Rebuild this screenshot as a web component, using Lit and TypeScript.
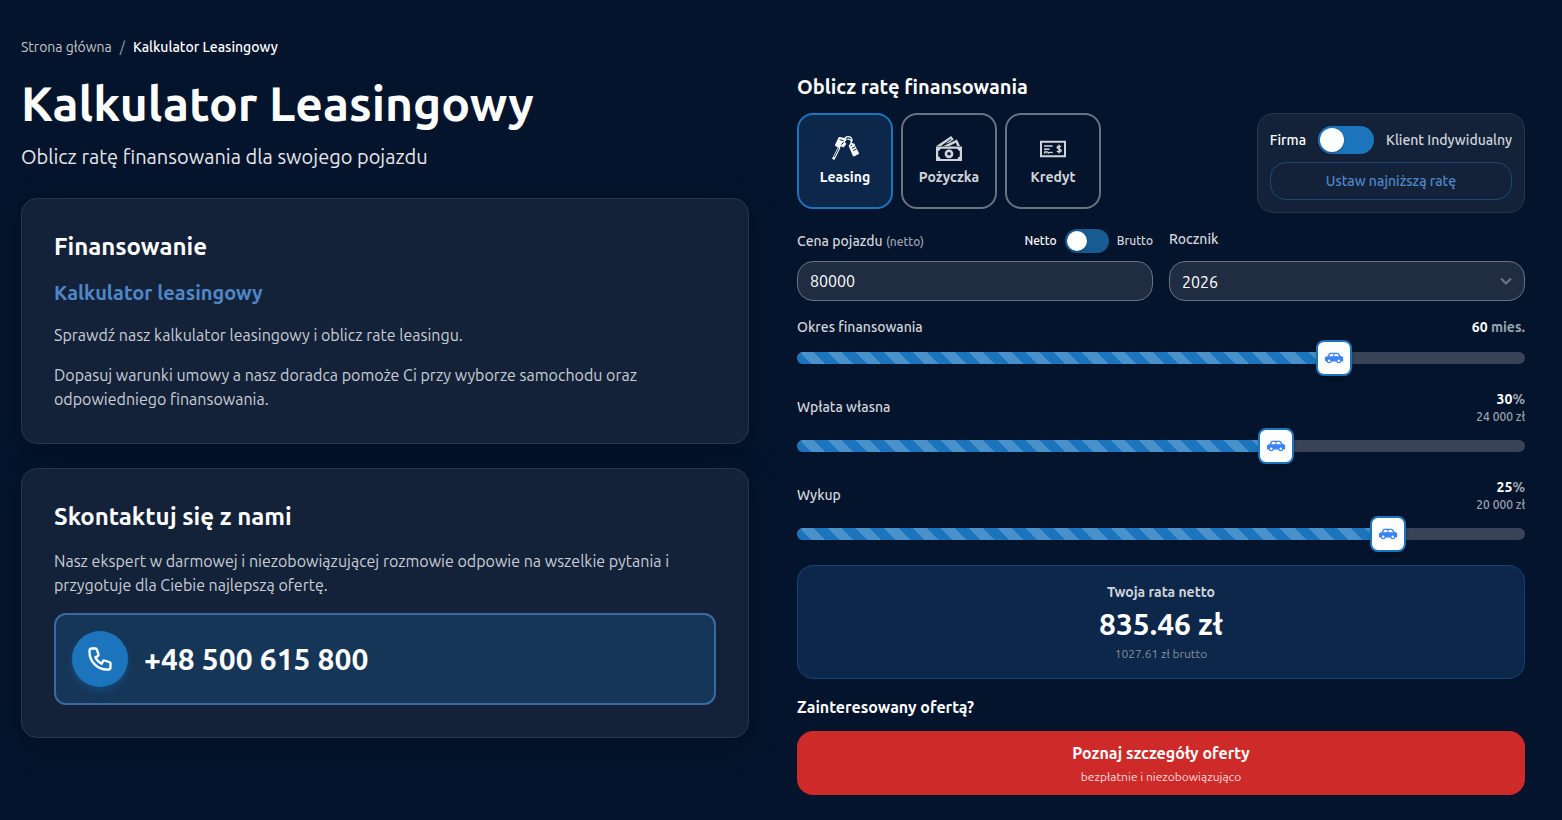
import { LitElement, html, css, svg } from "lit";
import { customElement, property, state } from "lit/decorators.js";
import { classMap } from "lit/directives/class-map.js";
import { styleMap } from "lit/directives/style-map.js";

const keysIcon = svg`
  <path fill="none" stroke="currentColor" stroke-width="2.6" d="M8.200 12.400 2.200 24.400"/>
  <path fill="none" stroke="#0c274a" stroke-width="0.900" d="M7.600 13.200 3.200 22"/>
  <path fill="currentColor" d="M7.400 2.800c.3-.7.900-1 1.600-.8L16 3.800l-2.200 3.400 1.700 1.600-2.900 3.800-2.600-1.400-1.400 1.800-3.800-1.800c-.7-.3-.9-1-.6-1.700z"/>
  <path fill="none" stroke="currentColor" stroke-width="1.300" d="M13.600 3.600C15 1 19.400.900 20.600 3.600c.8 1.800.2 3.600-1.200 4.800M16.400 4.400c1.600-.6 3.200.2 3.600 1.800"/>
  <path fill="currentColor" d="M17.600 10.800 19.800 8l3.400.6 4.600 9.200c.3.700.1 1.200-.5 1.500l-4 2c-.7.300-1.200.100-1.500-.5z"/>
  <g stroke="#0c274a" fill="none" stroke-width="1">
    <path d="m8.600 4.600 4 1.200M12.800 7.400l-2.600 2.200M21 13.400l3.600-1.800M22.200 15.600l3.600-1.800M19.600 10.800l1.400-.8"/>
  </g>`;

const cashIcon = svg`
  <path fill="currentColor" fill-rule="evenodd" d="M1 11.500h26V26H1zM5.600 13.700a3 3 0 0 1-2.400 2.400v5.400a3 3 0 0 1 2.400 2.400h16.800a3 3 0 0 1 2.400-2.400v-5.400a3 3 0 0 1-2.400-2.400z"/>
  <path fill="currentColor" fill-rule="evenodd" d="M14 14.400a4.400 4.400 0 1 1 0 8.800 4.400 4.400 0 0 1 0-8.800zm0 2.600a1.800 1.800 0 1 0 0 3.600 1.800 1.800 0 0 0 0-3.600z"/>
  <path fill="currentColor" d="M1.400 11 16.200 1l2.600 3.600-2 1.200-1.100-1.700L6 11z"/>
  <path fill="currentColor" d="m8.600 11 13.400-6.400 3 6.400h-2.800l-1.400-3.200L14.400 11z"/>
  <path fill="currentColor" d="m10.600 8.400 5-3.400 1.600.8-3.400 2z"/>`;

const chequeIcon = svg`
  <g fill="none" stroke="currentColor">
    <path d="M2 6.800h24v14.400H2z" stroke-width="2"/>
    <path d="M5 11h8.600M5 14.200h5.600" stroke-width="1.600"/>
    <path d="M5.200 18.600c.8-3 2-2.600 1.800-.6 1-2 2-1.400 2.200 0 1-1.200 3-.4 4.600-.4" stroke-width="1.200"/>
    <path d="M22 11.900c-.6-.8-3.800-1-3.800.6 0 1.800 4 .9 4 2.900 0 1.900-3.600 1.600-4.200.6M20.200 9.800v8.400" stroke-width="1.500"/>
  </g>`;

const phoneIcon = svg`
  <path fill="none" stroke="currentColor" stroke-width="2" stroke-linejoin="round" stroke-linecap="round"
    d="M3 5a2 2 0 012-2h3.280a1 1 0 01.948.684l1.498 4.493a1 1 0 01-.502 1.210l-2.257 1.130a11.042 11.042 0 005.516 5.516l1.130-2.257a1 1 0 011.210-.502l4.493 1.498a1 1 0 01.684.949V19a2 2 0 01-2 2h-1C9.716 21 3 14.284 3 6V5z"/>`;

@customElement("finance-slider")
export class FinanceSlider extends LitElement {
  @property() label = "";
  @property() unit = "";
  @property() amount = "";
  @property({ type: Number }) min = 0;
  @property({ type: Number }) max = 100;
  @property({ type: Number }) value = 0;

  static styles = css`
    :host { display: block; }
    .head {
      display: flex;
      justify-content: space-between;
      align-items: center;
      margin-bottom: 3px;
      font-size: 14px;
      line-height: 20px;
      font-weight: 500;
      color: #d1d5db;
    }
    .values { text-align: right; color: #9ca3af; font-weight: 600; }
    .values strong { color: #fff; font-weight: 700; }
    .amount { display: block; font-size: 12px; line-height: 16px; font-weight: 500; }
    .rail { display: grid; align-items: center; }
    .track, .range { grid-area: 1 / 1; }
    .track { height: 12px; border-radius: 6px; background: #384357; overflow: hidden; }
    .fill {
      height: 100%;
      background: repeating-linear-gradient(45deg, #1c75bc 0 10px, #4991ca 10px 20px);
    }
    .range {
      appearance: none;
      width: 100%;
      height: 36px;
      margin: 0;
      background: none;
      cursor: pointer;
    }
    .range::-webkit-slider-thumb {
      appearance: none;
      box-sizing: border-box;
      width: 36px;
      height: 36px;
      border: 2px solid #1c75bc;
      border-radius: 8px;
      background: #fff center / 20px 20px no-repeat
        url("data:image/svg+xml,%3Csvg xmlns='http://www.w3.org/2000/svg' viewBox='0 0 20 20'%3E%3Cpath fill='%233b82f6' fill-rule='evenodd' d='M6.200 4.800h7.300c.6 0 1 .2 1.400.7l2 2.700 1.500.4c.5.200.8.600.8 1.100v2.700c0 .6-.4 1-1 1h-1.100H2.300c-.8 0-1.400-.5-1.400-1.200v-1.600c0-1 .6-1.700 1.500-2L3.800 8l1.100-2.400c.3-.5.7-.8 1.300-.8zM6.300 5.900 5.200 8.200h4.100V5.900zm4.100 0v2.300h4.800l-1.500-2c-.2-.2-.4-.3-.6-.3z'/%3E%3Cg fill='%23fff' stroke='%233b82f6' stroke-width='1.200'%3E%3Ccircle cx='5.200' cy='12.800' r='1.900'/%3E%3Ccircle cx='14.800' cy='12.800' r='1.900'/%3E%3C/g%3E%3C/svg%3E");
      box-shadow: 0 2px 4px rgba(0, 0, 0, 0.2);
    }
  `;

  render() {
    const ratio = (this.value - this.min) / (this.max - this.min);
    return html`
      <div class="head">
        <label for="range">${this.label}</label>
        <div class="values">
          <strong>${this.value}</strong>${this.unit}
          ${this.amount ? html`<span class="amount">${this.amount}</span>` : null}
        </div>
      </div>
      <div class="rail">
        <div class="track"><div class="fill" style=${styleMap({ width: `${ratio * 100}%` })}></div></div>
        <input id="range" class="range" type="range" min=${this.min} max=${this.max} .value=${String(this.value)}
          @input=${(e: Event) => (this.value = Number((e.target as HTMLInputElement).value))} />
      </div>`;
  }
}

@customElement("app-root")
export class AppRoot extends LitElement {
  @state() private product = "Leasing";

  private products = [
    { name: "Leasing", icon: keysIcon },
    { name: "Pożyczka", icon: cashIcon },
    { name: "Kredyt", icon: chequeIcon },
  ];

  static styles = css`
    :host {
      display: block;
      box-sizing: border-box;
      min-height: 100vh;
      padding-right: 16px;
      background: #04142c;
      color: #fff;
      font-family: Ubuntu, "Open Sans", sans-serif;
      font-size: 16px;
      line-height: 24px;
    }
    * { box-sizing: border-box; }
    h1, h2, h3, p { margin: 0; }
    h1, h2, h3 { font-weight: 600; }
    button, input, select { font: inherit; color: inherit; }
    button { cursor: pointer; }

    .page {
      display: grid;
      grid-template-columns: repeat(2, minmax(0, 1fr));
      gap: 48px;
      max-width: 1536px;
      margin: 0 auto;
      padding: 37px 16px 24px;
    }

    .crumbs { display: flex; gap: 8px; font-size: 14px; line-height: 20px; color: #9ca3af; }
    .crumbs a { color: #c4c8cf; text-decoration: none; }
    .crumbs .here { color: #fff; font-weight: 500; }
    .title { margin-top: 16px; font-size: 48px; line-height: 60px; }
    .lead { margin-top: 10px; font-size: 20px; line-height: 28px; color: #e5e7eb; }
    .cards { display: grid; gap: 24px; margin-top: 27px; }
    .card {
      display: grid;
      gap: 16px;
      padding: 32px;
      border: 1px solid #29354b;
      border-radius: 16px;
      background: #142239;
      box-shadow: 0 8px 32px rgba(0, 0, 0, 0.2);
      color: #c8cdd5;
    }
    .card h2 { font-size: 24px; line-height: 32px; color: #fff; }
    .card h3 { font-size: 20px; line-height: 28px; color: #4f87c7; }
    .phone {
      display: flex;
      align-items: center;
      gap: 16px;
      padding: 16px;
      border: 2px solid #3a6aa3;
      border-radius: 12px;
      background: #163658;
      color: #fff;
      font-size: 30px;
      line-height: 36px;
      font-weight: 700;
      text-decoration: none;
    }
    .disc {
      display: grid;
      place-items: center;
      width: 56px;
      height: 56px;
      border-radius: 50%;
      background: #1c75bc;
      box-shadow: 0 4px 6px rgba(28, 117, 188, 0.3);
    }
    .disc svg { width: 28px; height: 28px; }

    .calc { padding-top: 36px; }
    .calc h2 { font-size: 20px; line-height: 28px; margin-bottom: 12px; }
    .top { display: flex; justify-content: space-between; align-items: flex-start; }
    .products { display: flex; gap: 8px; }
    .product {
      display: flex;
      flex-direction: column;
      align-items: center;
      justify-content: center;
      gap: 4px;
      width: 96px;
      height: 96px;
      padding: 0;
      border: 2px solid #6b7280;
      border-radius: 16px;
      background: none;
      color: #d1d5db;
      font-size: 14px;
      line-height: 20px;
      font-weight: 600;
    }
    .product svg { width: 28px; height: 28px; }
    .product.active { border-color: #1c75bc; background: #0c274a; color: #fff; }

    .client {
      display: grid;
      gap: 8px;
      padding: 12px;
      border: 1px solid #29354b;
      border-radius: 16px;
      background: #142239;
      font-size: 14px;
      line-height: 20px;
      font-weight: 500;
    }
    .pair { display: flex; align-items: center; justify-content: space-between; gap: 12px; }
    .off { color: #d1d5db; }
    .lowest {
      height: 38px;
      border: 1px solid #1a4a78;
      border-radius: 16px;
      background: none;
      color: #4f87c7;
    }
    .switch {
      appearance: none;
      display: flex;
      width: 56px;
      height: 28px;
      margin: 0;
      padding: 2px;
      border-radius: 14px;
      background: #1c75bc;
      cursor: pointer;
    }
    .switch::before {
      content: "";
      height: 100%;
      aspect-ratio: 1;
      border-radius: 50%;
      background: #fff;
      box-shadow: 0 1px 2px rgba(0, 0, 0, 0.3);
    }
    .switch:checked { justify-content: flex-end; }
    .switch.small { width: 44px; height: 24px; background: #185a92; }

    .fields { display: grid; grid-template-columns: 1fr 1fr; gap: 16px; margin-top: 16px; }
    .field { display: flex; flex-direction: column; justify-content: space-between; height: 72px; }
    .field-head { display: flex; justify-content: space-between; align-items: center; }
    .label { font-size: 14px; line-height: 20px; font-weight: 500; color: #d1d5db; }
    .label small { font-size: 12px; color: #9ca3af; }
    .tax { display: flex; align-items: center; gap: 8px; font-size: 12px; line-height: 16px; font-weight: 500; }
    .box {
      width: 100%;
      height: 40px;
      padding: 0 12px;
      border: 1px solid #6b7280;
      border-radius: 16px;
      background: #1f2c42;
      color: #fff;
    }
    select.box {
      appearance: none;
      padding-top: 2px;
      background: #1f2c42 right 12px center / 12px 8px no-repeat
        url("data:image/svg+xml,%3Csvg xmlns='http://www.w3.org/2000/svg' viewBox='0 0 12 8'%3E%3Cpath d='M1 1.500 6 6.500 11 1.500' fill='none' stroke='%236b7280' stroke-width='2.200'/%3E%3C/svg%3E");
    }
    .sliders { display: grid; gap: 13px; margin-top: 16px; }

    .result {
      display: grid;
      gap: 4px;
      margin-top: 13px;
      padding: 16px;
      border: 1px solid #124574;
      border-radius: 16px;
      background: #0c274a;
      text-align: center;
    }
    .result-label { font-size: 14px; line-height: 20px; font-weight: 600; color: #d1d5db; }
    .result-value { font-size: 30px; line-height: 36px; font-weight: 700; }
    .result-gross { font-size: 12px; line-height: 16px; color: #8791a1; }
    .ask { margin: 16px 0 12px; font-weight: 600; }
    .offer {
      display: grid;
      gap: 4px;
      width: 100%;
      padding: 10px 16px;
      border: 0;
      border-radius: 16px;
      background: #ce2a2a;
      font-weight: 600;
    }
    .offer small { font-size: 12px; line-height: 16px; font-weight: 400; color: #f8dede; }
  `;

  render() {
    return html`
      <main class="page">
        <section>
          <nav class="crumbs">
            <a href="#">Strona główna</a><span>/</span><span class="here">Kalkulator Leasingowy</span>
          </nav>
          <h1 class="title">Kalkulator Leasingowy</h1>
          <p class="lead">Oblicz ratę finansowania dla swojego pojazdu</p>
          <div class="cards">
            <article class="card">
              <h2>Finansowanie</h2>
              <h3>Kalkulator leasingowy</h3>
              <p>Sprawdź nasz kalkulator leasingowy i oblicz rate leasingu.</p>
              <p>Dopasuj warunki umowy a nasz doradca pomoże Ci przy wyborze samochodu oraz odpowiedniego finansowania.</p>
            </article>
            <article class="card">
              <h2>Skontaktuj się z nami</h2>
              <p>Nasz ekspert w darmowej i niezobowiązującej rozmowie odpowie na wszelkie pytania i przygotuje dla Ciebie najlepszą ofertę.</p>
              <a class="phone" href="tel:+48500615800">
                <span class="disc"><svg viewBox="0 0 24 24">${phoneIcon}</svg></span>
                <span>+48 500 615 800</span>
              </a>
            </article>
          </div>
        </section>

        <section class="calc">
          <h2>Oblicz ratę finansowania</h2>
          <div class="top">
            <div class="products">
              ${this.products.map((p) => html`
                <button class=${classMap({ product: true, active: p.name === this.product })}
                  @click=${() => (this.product = p.name)}>
                  <svg viewBox="0 0 28 28">${p.icon}</svg>
                  <span>${p.name}</span>
                </button>`)}
            </div>
            <div class="client">
              <div class="pair">
                <label for="client">Firma</label>
                <input id="client" class="switch" type="checkbox" role="switch" />
                <label class="off" for="client">Klient Indywidualny</label>
              </div>
              <button class="lowest">Ustaw najniższą ratę</button>
            </div>
          </div>

          <div class="fields">
            <div class="field">
              <div class="field-head">
                <label class="label" for="price">Cena pojazdu <small>(netto)</small></label>
                <div class="tax">
                  <label for="tax">Netto</label>
                  <input id="tax" class="switch small" type="checkbox" role="switch" />
                  <label class="off" for="tax">Brutto</label>
                </div>
              </div>
              <input id="price" class="box" type="text" inputmode="numeric" value="80000" />
            </div>
            <div class="field">
              <label class="label" for="year">Rocznik</label>
              <select id="year" class="box">
                <option>2026</option><option>2025</option><option>2024</option>
              </select>
            </div>
          </div>

          <div class="sliders">
            <finance-slider label="Okres finansowania" unit=" mies." min="24" max="72" value="60"></finance-slider>
            <finance-slider label="Wpłata własna" unit="%" amount="24 000 zł" min="0" max="45" value="30"></finance-slider>
            <finance-slider label="Wykup" unit="%" amount="20 000 zł" min="1" max="30" value="25"></finance-slider>
          </div>

          <div class="result">
            <div class="result-label">Twoja rata netto</div>
            <div class="result-value">835.46 zł</div>
            <div class="result-gross">1027.61 zł brutto</div>
          </div>
          <p class="ask">Zainteresowany ofertą?</p>
          <button class="offer">Poznaj szczegóły oferty<small>bezpłatnie i niezobowiązująco</small></button>
        </section>
      </main>`;
  }
}
